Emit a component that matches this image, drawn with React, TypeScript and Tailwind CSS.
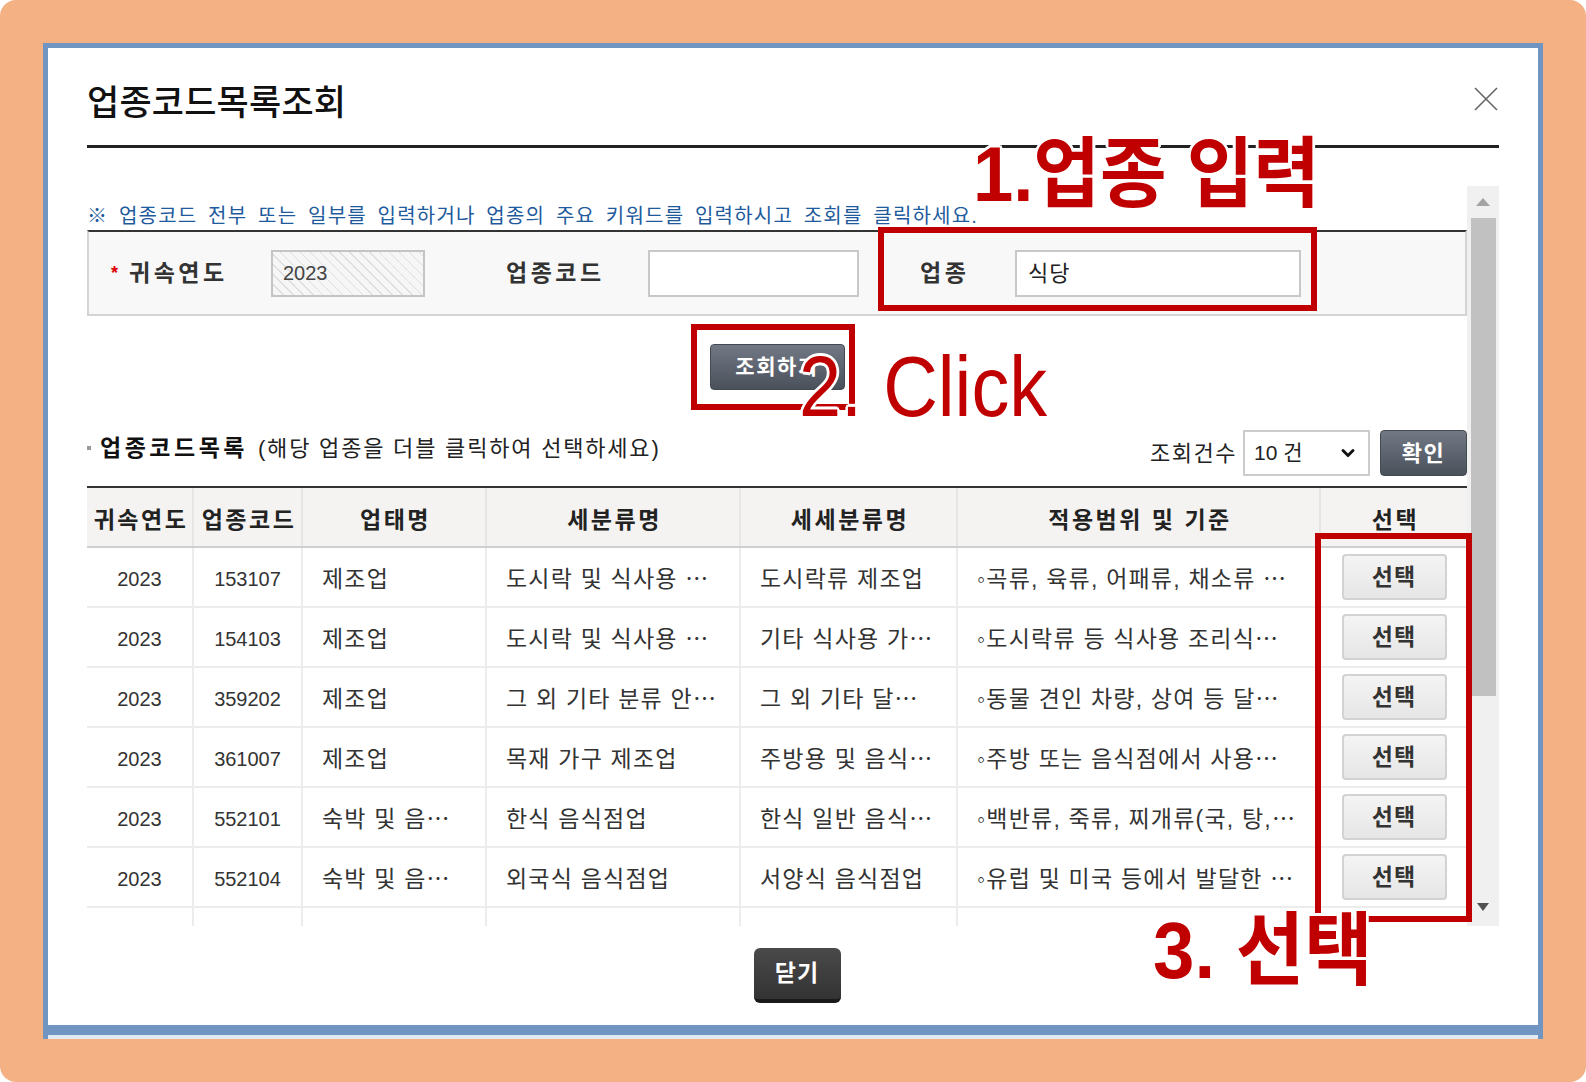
import { ChevronDown } from "lucide-react";

const cols = "grid grid-cols-[107px_109px_184px_254px_217px_363px_146px]";

const rows = [
  ["2023", "153107", "제조업", "도시락 및 식사용 ⋯", "도시락류 제조업", "◦곡류, 육류, 어패류, 채소류 ⋯"],
  ["2023", "154103", "제조업", "도시락 및 식사용 ⋯", "기타 식사용 가⋯", "◦도시락류 등 식사용 조리식⋯"],
  ["2023", "359202", "제조업", "그 외 기타 분류 안⋯", "그 외 기타 달⋯", "◦동물 견인 차량, 상여 등 달⋯"],
  ["2023", "361007", "제조업", "목재 가구 제조업", "주방용 및 음식⋯", "◦주방 또는 음식점에서 사용⋯"],
  ["2023", "552101", "숙박 및 음⋯", "한식 음식점업", "한식 일반 음식⋯", "◦백반류, 죽류, 찌개류(국, 탕,⋯"],
  ["2023", "552104", "숙박 및 음⋯", "외국식 음식점업", "서양식 음식점업", "◦유럽 및 미국 등에서 발달한 ⋯"],
];

const halo =
  "[text-shadow:3px_0_#fff,-3px_0_#fff,0_3px_#fff,0_-3px_#fff,2px_2px_#fff,-2px_-2px_#fff,2px_-2px_#fff,-2px_2px_#fff]";

const App = () => {
  return (
    <div className="relative h-[1082px] w-[1586px] overflow-hidden bg-white font-['Liberation_Sans','Noto_Sans_CJK_KR',sans-serif] text-[#333]">
      <div className="h-full rounded-[16px] bg-[#f4b183] px-[43px] pt-[43px]">
        {/* window */}
        <div className="flex h-[996px] w-[1500px] flex-col border-x-[5px] border-t-[5px] border-[#7095c3]">
          <div className="flex-1 bg-white px-[39px]">
            {/* header */}
            <div className="flex h-[100px] items-center justify-between border-b-[3px] border-[#222] pt-[12px]">
              <h1 className="text-[35px] font-medium leading-none tracking-[0.2px] text-[#111]">업종코드목록조회</h1>
              <svg width="26" height="26" viewBox="0 0 26 26" className="mb-[8px]">
                <path d="M2 2 L24 24 M24 2 L2 24" stroke="#666" strokeWidth="1.6" fill="none" />
              </svg>
            </div>

            {/* scroll area */}
            <div className="mt-[38px] flex h-[740px] overflow-hidden">
              <div className="w-[1380px]">
                <div className="h-[44px] pt-[18px] text-[20px] leading-[24px] tracking-[1.2px] [word-spacing:4px] text-[#1e5a9c]">
                  ※ 업종코드 전부 또는 일부를 입력하거나 업종의 주요 키워드를 입력하시고 조회를 클릭하세요.
                </div>

                {/* search box */}
                <div className="flex h-[86px] items-center border-x-2 border-b-2 border-t-2 border-x-[#d4d4d4] border-b-[#d4d4d4] border-t-[#333] bg-[#f8f8f8] pl-[22px] text-[23px] font-bold tracking-[3.5px]">
                  <span className="w-[18px] text-[18px] text-[#d00]">*</span>
                  <span className="w-[142px]">귀속연도</span>
                  <div className="flex h-[47px] w-[154px] items-center border-2 border-[#c4c4c4] bg-[repeating-linear-gradient(45deg,#dedede_0,#dedede_1px,#f6f6f6_1px,#f6f6f6_7px)] pl-[10px] text-[20px] font-normal tracking-normal text-[#444]">
                    2023
                  </div>
                  <span className="ml-[81px] w-[142px]">업종코드</span>
                  <div className="h-[47px] w-[211px] border-2 border-[#c8c8c8] bg-white" />
                  <span className="ml-[61px] w-[95px]">업종</span>
                  <div className="flex h-[47px] w-[286px] items-center border-2 border-[#c8c8c8] bg-white pl-[11px] text-[22px] font-normal tracking-[1px] text-[#222]">
                    식당
                  </div>
                </div>

                <div className="mt-[28px] flex justify-center">
                  <button className="h-[46px] w-[135px] rounded-[4px] border border-[#444a52] bg-gradient-to-b from-[#727985] to-[#4b515b] text-[21px] font-bold tracking-[1.5px] text-white">
                    조회하기
                  </button>
                </div>

                {/* list header */}
                <div className="mt-[40px] flex h-[46px] items-center justify-between">
                  <div className="flex items-center pb-[10px]">
                    <span className="mr-[9px] h-[4px] w-[4px] bg-[#999]" />
                    <span className="text-[23px] font-bold tracking-[3.5px] text-[#111]">업종코드목록</span>
                    <span className="ml-[10px] text-[22px] tracking-[1.8px] text-[#222]">(해당 업종을 더블 클릭하여 선택하세요)</span>
                  </div>
                  <div className="flex h-full items-center">
                    <span className="mr-[6px] text-[22px] tracking-[1.5px] text-[#222]">조회건수</span>
                    <div className="flex h-[46px] w-[127px] items-center justify-between border-2 border-[#ccc] bg-white pl-[9px] pr-[10px] text-[21px] text-[#222]">
                      <span>10 건</span>
                      <ChevronDown size={20} strokeWidth={3.5} className="text-[#111]" />
                    </div>
                    <button className="ml-[10px] h-[46px] w-[87px] rounded-[4px] border border-[#444a52] bg-gradient-to-b from-[#727985] to-[#4b515b] text-[22px] font-bold tracking-[1.5px] text-white">
                      확인
                    </button>
                  </div>
                </div>

                {/* table */}
                <div className="mt-[10px] border-t-2 border-[#333]">
                  <div className={`${cols} h-[60px] border-b-2 border-[#cfcfcf] bg-[#f4f3f1] text-[23px] font-bold tracking-[2.5px] text-[#222]`}>
                    {["귀속연도", "업종코드", "업태명", "세분류명", "세세분류명", "적용범위 및 기준", "선택"].map((h, i) => (
                      <div
                        key={h}
                        className={`flex items-center justify-center pl-[3px] pt-[6px] ${i < 6 ? "border-r-2 border-[#e6e5e3]" : ""}`}
                      >
                        {h}
                      </div>
                    ))}
                  </div>
                  {[...rows, ["", "", "", "", "", ""]].map((r, ri) => (
                    <div key={ri} className={`${cols} h-[60px] border-b-2 border-[#ececec] text-[#333]`}>
                      {r.map((c, i) => (
                        <div
                          key={i}
                          className={`flex items-center border-r-2 border-[#ececec] pt-[4px] ${i < 2 ? "justify-center text-[20px]" : "pl-[19px] text-[23px] tracking-[1.2px]"}`}
                        >
                          {c}
                        </div>
                      ))}
                      <div className="flex items-center justify-center">
                        {ri < 6 && (
                          <button className="h-[46px] w-[105px] rounded-[4px] border-2 border-[#d2d2d2] bg-gradient-to-b from-[#f4f4f4] to-[#e6e6e6] text-[23px] font-bold tracking-[1px] text-[#333]">
                            선택
                          </button>
                        )}
                      </div>
                    </div>
                  ))}
                </div>
              </div>

              {/* scrollbar */}
              <div className="flex w-[32px] flex-col items-center bg-[#f0f0f0]">
                <div className="flex h-[32px] items-center">
                  <svg width="14" height="8" viewBox="0 0 14 8">
                    <path d="M7 0 L14 8 L0 8 Z" fill="#a3a3a3" />
                  </svg>
                </div>
                <div className="h-[478px] w-[25px] bg-[#c1c1c1]" />
                <div className="flex-1" />
                <div className="flex h-[28px] items-center pb-[10px]">
                  <svg width="12" height="8" viewBox="0 0 12 8">
                    <path d="M0 0 L12 0 L6 8 Z" fill="#505050" />
                  </svg>
                </div>
              </div>
            </div>

            {/* footer */}
            <div className="mt-[22px] flex justify-center pl-[8px]">
              <button className="h-[55px] w-[87px] rounded-[6px] border-b-[4px] border-[#1a1a1a] bg-gradient-to-b from-[#4a4a4a] to-[#333] text-[23px] font-bold tracking-[1px] text-white">
                닫기
              </button>
            </div>
          </div>
          <div className="h-[10px] bg-[#7095c3]" />
          <div className="h-[4px] bg-[#e3eaf4]" />
        </div>
      </div>

      {/* annotations */}
      <div className="absolute left-[878px] top-[227px] h-[84px] w-[439px] border-[6px] border-[#c00000]" />
      <div className="absolute left-[691px] top-[324px] h-[86px] w-[164px] border-[6px] border-[#c00000]" />
      <div className="absolute left-[1315px] top-[533px] h-[389px] w-[157px] border-[6px] border-[#c00000]" />

      <div className={`absolute left-[973px] top-[136px] origin-left scale-x-[0.94] whitespace-nowrap text-[77px] font-bold leading-[77px] text-[#c00000] ${halo}`}>
        1.업종 입력
      </div>
      <div className={`absolute left-[799px] top-[343px] origin-left scale-x-[0.88] whitespace-nowrap text-[86px] leading-[86px] text-[#c00000] ${halo}`}>
        2. Click
      </div>
      <div className={`absolute left-[1153px] top-[911px] origin-left scale-x-[0.93] whitespace-nowrap text-[80px] font-bold leading-[80px] text-[#c00000] ${halo}`}>
        3. 선택
      </div>
    </div>
  );
};

export default App;
